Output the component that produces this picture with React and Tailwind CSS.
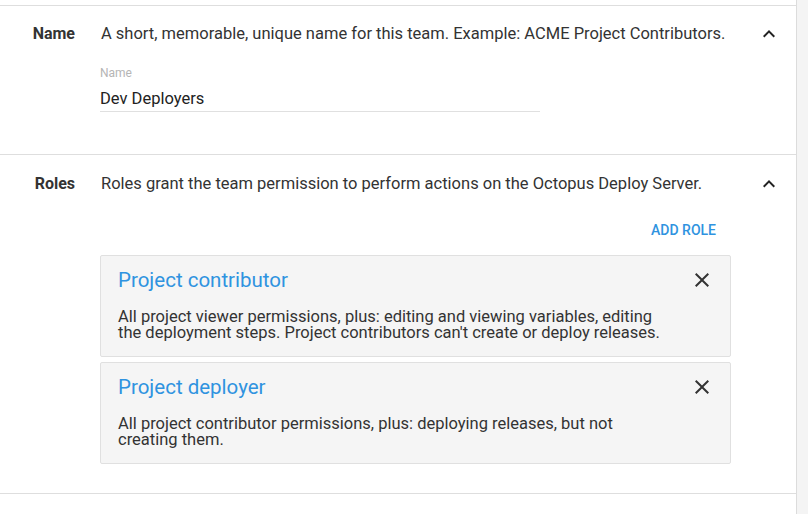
import React from "react";

const ChevronUp = () => (
  <svg width="24" height="24" viewBox="0 0 24 24" className="text-[#222]">
    <path fill="currentColor" d="M12 8l-6 6 1.41 1.41L12 10.83l4.59 4.58L18 14z" />
  </svg>
);

const Close = () => (
  <svg width="24" height="24" viewBox="0 0 24 24" className="text-[#333]">
    <path
      fill="currentColor"
      d="M19 6.41L17.59 5 12 10.59 6.41 5 5 6.41 10.59 12 5 17.59 6.41 19 12 13.41 17.59 19 19 17.59 13.41 12z"
    />
  </svg>
);

const SectionHeader = ({ label, text }) => (
  <div className="flex items-center h-6">
    <div className="w-[75px] text-right text-base font-bold text-[#333]">{label}</div>
    <div className="ml-[26px] flex-1 text-[16.5px] text-[#333]">{text}</div>
    <div className="w-[24px] mr-[15.5px] flex items-center justify-center">
      <ChevronUp />
    </div>
  </div>
);

const RoleCard = ({ title, description }) => (
  <div className="flex border border-[#e0e0e0] rounded-[2px] bg-[#f5f5f5] pl-[17px] pr-[16px] pt-[10px] pb-[15px]">
    <div className="flex-1">
      <div className="text-[20.5px] leading-7 text-[#2f93e0]">{title}</div>
      <p className="mt-[15px] max-w-[548px] text-[16.5px] leading-[16px] text-[#333]">
        {description}
      </p>
    </div>
    <div className="pt-[2px]">
      <Close />
    </div>
  </div>
);

export default function App() {
  return (
    <div
      className="flex w-[808px] h-[514px] bg-white overflow-hidden"
      style={{ fontFamily: "Roboto, 'Liberation Sans', sans-serif" }}
    >
      <div className="w-[797px] border-r border-[#dcdcdc] pt-[5px]">
        <section className="border-t border-b border-[#dedede] pt-4 pb-[42px]">
          <SectionHeader
            label="Name"
            text="A short, memorable, unique name for this team. Example: ACME Project Contributors."
          />
          <div className="ml-[100px] mt-[19px] w-[440px]">
            <div className="text-xs leading-4 text-[#b5b5b5]">Name</div>
            <div className="mt-[6px] text-[16.5px] leading-6 text-[#222] border-b border-[#e0e0e0]">
              Dev Deployers
            </div>
          </div>
        </section>
        <section className="border-b border-[#dedede] pt-[17px] pb-[29px]">
          <SectionHeader
            label="Roles"
            text="Roles grant the team permission to perform actions on the Octopus Deploy Server."
          />
          <div className="ml-[100px] mr-[65px] mt-4">
            <div className="flex justify-end">
              <button className="h-9 px-[15px] text-sm font-medium uppercase text-[#2f93e0]">
                Add role
              </button>
            </div>
            <div className="mt-[7px] flex flex-col gap-[5px]">
              <RoleCard
                title="Project contributor"
                description="All project viewer permissions, plus: editing and viewing variables, editing the deployment steps. Project contributors can't create or deploy releases."
              />
              <RoleCard
                title="Project deployer"
                description="All project contributor permissions, plus: deploying releases, but not creating them."
              />
            </div>
          </div>
        </section>
      </div>
      <div className="flex-1 bg-[#f4f4f4]" />
    </div>
  );
}
